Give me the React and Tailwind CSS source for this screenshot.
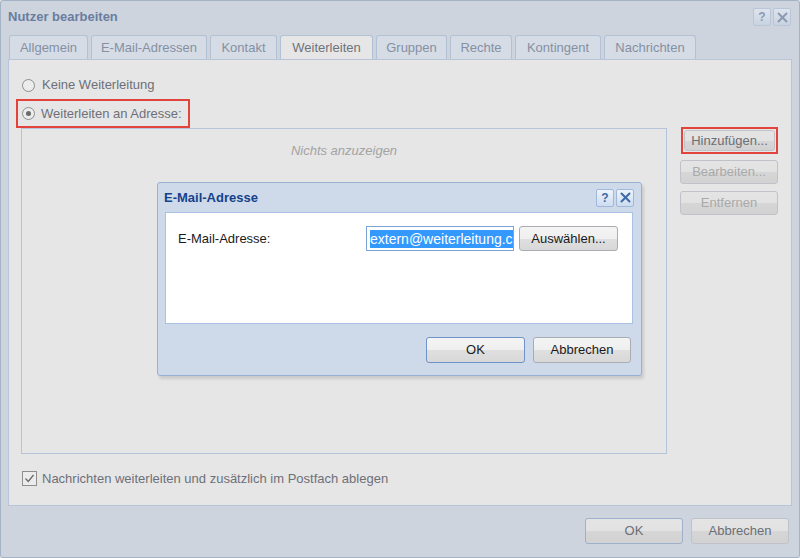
import React from 'react';

const font = { fontFamily: '"Liberation Sans", Arial, sans-serif' };

const tabs = [
  { label: 'Allgemein', w: 'w-[79px]' },
  { label: 'E-Mail-Adressen', w: 'w-[116px]' },
  { label: 'Kontakt', w: 'w-[67px]' },
  { label: 'Weiterleiten', w: 'w-[93px]', active: true },
  { label: 'Gruppen', w: 'w-[71px]' },
  { label: 'Rechte', w: 'w-[62px]' },
  { label: 'Kontingent', w: 'w-[86px]' },
  { label: 'Nachrichten', w: 'w-[92px]' },
];

// kleine Werkzeug-Buttons (? und X)
const ToolBtn = ({ children, dim }) => (
  <div
    className={`w-[18px] h-[18px] rounded-[2px] border flex items-center justify-center ${
      dim
        ? 'border-[#b9c6d8] bg-gradient-to-b from-[#dde4ee] to-[#c9d3e0]'
        : 'border-[#9fb8da] bg-gradient-to-b from-[#eef4fc] to-[#cddcf0]'
    }`}
  >
    {children}
  </div>
);

const HelpIcon = ({ dim }) => (
  <span className={`text-[12px] font-bold leading-none ${dim ? 'text-[#8a9ab3]' : 'text-[#3d6aa6]'}`}>?</span>
);

const CloseIcon = ({ dim }) => (
  <svg width="11" height="11" viewBox="0 0 11 11">
    <path d="M1.5 1.5 L9.5 9.5 M9.5 1.5 L1.5 9.5" stroke={dim ? '#8a9ab3' : '#3d6aa6'} strokeWidth="2" strokeLinecap="round" />
  </svg>
);

const Button = ({ children, className = '', dim, disabled, focus }) => (
  <div
    className={`flex items-center justify-center rounded-[3px] border text-[13px] ${
      focus ? 'border-[#7d9ccc]' : dim ? 'border-[#bfc3c9]' : 'border-[#a9adb3]'
    } ${
      dim
        ? 'bg-[linear-gradient(#e4e4e4_0%,#e2e2e2_50%,#d6d6d6_51%,#d2d2d2_100%)]'
        : 'bg-[linear-gradient(#f4f4f4_0%,#efefef_50%,#dfdfdf_51%,#d8d8d8_100%)]'
    } ${disabled ? 'text-[#a9a9a9]' : dim ? 'text-[#6b6e75]' : 'text-[#1a1a1a]'} ${className}`}
  >
    {children}
  </div>
);

export default function App() {
  return (
    <div style={font} className="w-[800px] h-[558px] bg-[#e4e4e4] relative">
      {/* Hauptfenster (abgeblendet) */}
      <div className="w-[800px] h-[558px] bg-[#cdd4de] border border-[#a4b2c6] rounded-[3px] flex flex-col">
        <div className="h-[32px] flex items-center justify-between pl-[7px] pr-[8px]">
          <span className="text-[13px] font-bold text-[#6a7d9e]">Nutzer bearbeiten</span>
          <div className="flex gap-[2px]">
            <ToolBtn dim><HelpIcon dim /></ToolBtn>
            <ToolBtn dim><CloseIcon dim /></ToolBtn>
          </div>
        </div>

        {/* Reiter */}
        <div className="flex gap-[3px] pl-[8px] mt-[2px] h-[24px]">
          {tabs.map((t) => (
            <div
              key={t.label}
              className={`${t.w} h-[24px] rounded-t-[3px] border border-b-0 border-[#b3c1d5] flex items-center justify-center text-[13px] ${
                t.active ? 'bg-[#e6e6e6] text-[#6f737b]' : 'bg-[#d5dce6] text-[#8590a3]'
              }`}
            >
              {t.label}
            </div>
          ))}
        </div>

        {/* Inhalt */}
        <div className="ml-[7px] w-[784px] h-[447px] bg-[#e6e6e6] border border-[#b8c5d8] flex flex-col pl-[12px] pt-[15px] text-[#6e7079] text-[13px]">
          <div className="flex items-center h-[20px]">
            <div className="w-[13px] h-[13px] rounded-full border border-[#8e8e8e] bg-[#ececec] ml-[1px]" />
            <span className="ml-[7px]">Keine Weiterleitung</span>
          </div>
          <div className="mt-[4px] -ml-[5px] w-[174px] h-[29px] border-2 border-[#e2433b] flex items-center pl-[4px]">
            <div className="w-[13px] h-[13px] rounded-full border border-[#8e8e8e] bg-[#ececec] flex items-center justify-center">
              <div className="w-[5px] h-[5px] rounded-full bg-[#6a6a6a]" />
            </div>
            <span className="ml-[6px]">Weiterleiten an Adresse:</span>
          </div>

          <div className="flex">
            <div className="w-[646px] h-[326px] border border-[#b5c4da] flex justify-center pt-[12px]">
              <span className="italic text-[#a3a3a3]">Nichts anzuzeigen</span>
            </div>
            <div className="ml-[13px] w-[98px] flex flex-col -mt-[1px]">
              <div className="border-2 border-[#e2433b] ml-[1px] w-[97px] h-[27px] p-[1px]">
                <Button dim className="h-full w-full">Hinzufügen...</Button>
              </div>
              <Button dim disabled className="mt-[6px] h-[24px]">Bearbeiten...</Button>
              <Button dim disabled className="mt-[7px] h-[24px]">Entfernen</Button>
            </div>
          </div>

          <div className="flex items-center mt-[15px]">
            <div className="w-[15px] h-[15px] border border-[#8e8e8e] bg-[#ececec] ml-[1px] flex items-center justify-center">
              <svg width="11" height="11" viewBox="0 0 11 11">
                <path d="M1.5 5.5 L4.3 8.5 L9.5 2" stroke="#6a6a6a" strokeWidth="1.3" fill="none" />
              </svg>
            </div>
            <span className="ml-[5px]">Nachrichten weiterleiten und zusätzlich im Postfach ablegen</span>
          </div>
        </div>

        <div className="flex justify-end gap-[8px] pr-[10px] mt-[12px]">
          <Button dim focus className="w-[98px] h-[26px] !border-[#9db0cc]">OK</Button>
          <Button dim className="w-[98px] h-[26px]">Abbrechen</Button>
        </div>
      </div>

      {/* Dialog E-Mail-Adresse */}
      <div className="absolute left-[157px] top-[182px] w-[485px] h-[194px] bg-[#cedae9] border border-[#99b1d2] rounded-[3px] shadow-[2px_3px_3px_rgba(0,0,0,0.12)] flex flex-col">
        <div className="h-[29px] flex items-center justify-between pl-[6px] pr-[7px]">
          <span className="text-[13px] font-bold text-[#15428b]">E-Mail-Adresse</span>
          <div className="flex gap-[2px]">
            <ToolBtn><HelpIcon /></ToolBtn>
            <ToolBtn><CloseIcon /></ToolBtn>
          </div>
        </div>
        <div className="ml-[7px] w-[468px] h-[112px] bg-white border border-[#a9c1e4] flex items-start pt-[13px] pl-[12px]">
          <div className="h-[25px] flex items-center text-[13px] text-[#1a1a1a] w-[188px]">E-Mail-Adresse:</div>
          <div className="w-[148px] h-[25px] border border-[#7fa2d6] bg-white overflow-hidden flex items-center pl-[3px]">
            <span className="bg-[#3399ff] text-white text-[14px] leading-[18px] whitespace-nowrap">extern@weiterleitung.c</span>
          </div>
          <Button className="ml-[5px] w-[99px] h-[25px]">Auswählen...</Button>
        </div>
        <div className="flex justify-end gap-[8px] pr-[10px] mt-[13px]">
          <Button focus className="w-[99px] h-[26px] !border-[#6f93c9]">OK</Button>
          <Button className="w-[98px] h-[26px]">Abbrechen</Button>
        </div>
      </div>
    </div>
  );
}
